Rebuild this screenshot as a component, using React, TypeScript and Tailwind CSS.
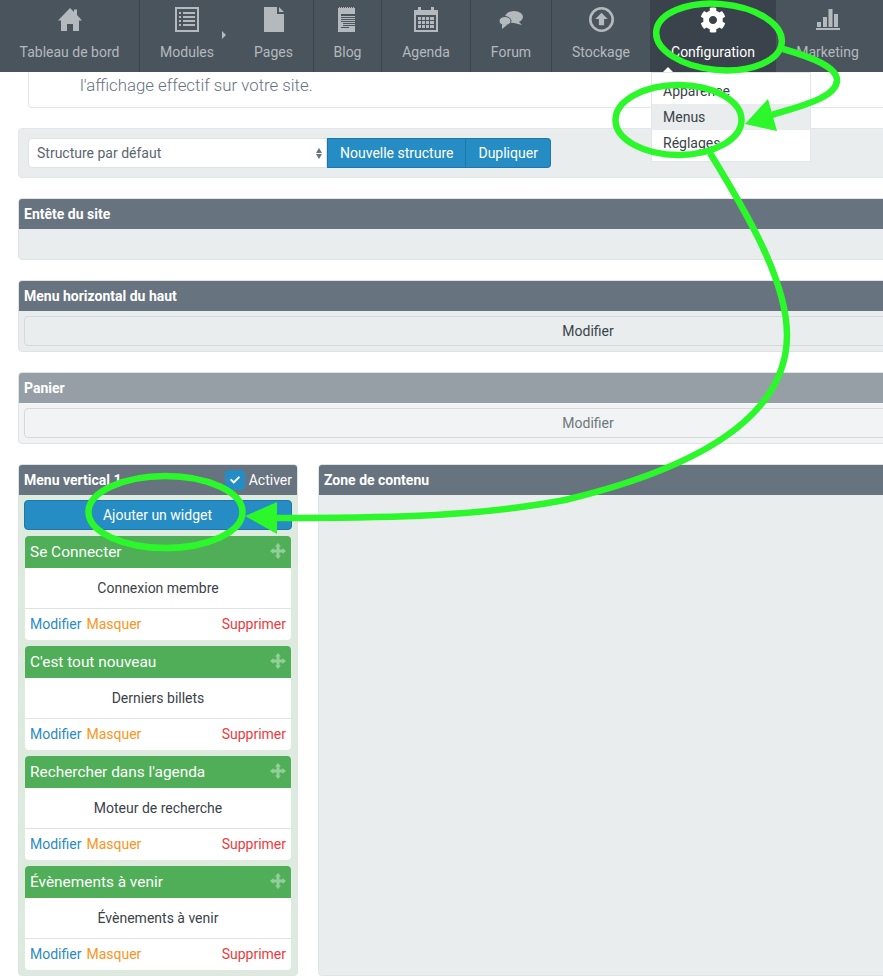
import { FaCog, FaCheck } from "react-icons/fa";

const roboto = { fontFamily: "Roboto, sans-serif" };

function HomeIcon() {
  return (
    <svg width="24" height="23" viewBox="0 0 24 23" fill="#b4b9bd">
      <path d="M12 0l4 4V1.500h3V7l5 5.500h-3V23h-6v-7H9v7H3V12.500H0z" />
    </svg>
  );
}

function ListIcon() {
  return (
    <svg width="24" height="25" viewBox="0 0 24 25" fill="#b4b9bd">
      <path fillRule="evenodd" d="M0 0h24v25H0zM2 2v21h20V2z" />
      <path d="M4 5h2v2H4zM8 5h12v2H8zM4 9h2v2H4zM8 9h12v2H8zM4 13h2v2H4zM8 13h12v2H8zM4 17h2v2H4zM8 17h12v2H8z" />
    </svg>
  );
}

function PageIcon() {
  return (
    <svg width="20" height="25" viewBox="0 0 20 25" fill="#b4b9bd">
      <path d="M0 0h13v7h7v18H0zM15 0l5 5h-5z" />
    </svg>
  );
}

function BlogIcon() {
  return (
    <svg width="20" height="25" viewBox="0 0 20 25" fill="#b4b9bd">
      <path fillRule="evenodd" d="M0 1h1v-1h1v1h1v-1h1v1h1v-1h1v1h1v-1h1v1h1v-1h1v1h1v-1h1v1h1v-1h1v1h1v-1h1v1h1v24H0zM3 7v2h14V7zM3 10v1h14v-1zM3 12v1h14v-1zM3 14v1h14v-1zM5 16v1h12v-1zM5 18v1h12v-1zM3 20v1h8v-1z" />
    </svg>
  );
}

function CalendarIcon() {
  return (
    <svg width="24" height="25" viewBox="0 0 24 25" fill="#b4b9bd">
      <path fillRule="evenodd" d="M0 3h4V0h3v3h10V0h3v3h4v22H0zM2 8v15h20V8z" />
      <path d="M4 10h3v3H4zM8 10h3v3H8zM12 10h3v3h-3zM16 10h4v3h-4zM4 14h3v3H4zM8 14h3v3H8zM12 14h3v3h-3zM16 14h4v3h-4zM4 18h3v3H4zM8 18h3v3H8zM12 18h3v3h-3zM16 18h4v3h-4z" />
    </svg>
  );
}

function ForumIcon() {
  return (
    <svg width="24" height="18" viewBox="0 0 24 18" fill="#b4b9bd">
      <ellipse cx="15" cy="6" rx="9" ry="6" />
      <path d="M19 10l4 4-8-2z" />
      <ellipse cx="6" cy="10" rx="6" ry="4.500" stroke="#4a545d" strokeWidth="1" />
      <path d="M3 13l0 5 5-4z" />
    </svg>
  );
}

function UploadIcon() {
  return (
    <svg width="25" height="25" viewBox="0 0 24 24" fill="#b4b9bd">
      <path fillRule="evenodd" d="M12 0a12 12 0 1 0 0 24a12 12 0 0 0 0-24zM12 2.500a9.500 9.500 0 1 1 0 19a9.500 9.500 0 0 1 0-19z" />
      <path d="M12 5.500l6 6h-3.500v6h-5v-6H6z" />
    </svg>
  );
}

function ChartIcon() {
  return (
    <svg width="24" height="21" viewBox="0 0 24 21" fill="#b4b9bd">
      <path d="M0 19h24v2H0zM1 13h4v5H1zM7 8h4v10H7zM12.500 0h4v18h-4zM18 5h4v13h-4z" />
    </svg>
  );
}

function MoveIcon() {
  return (
    <svg className="mb-[2px]" width="16" height="16" viewBox="0 0 16 16" fill="#93cf98">
      <path d="M8 0l3 3.500H9.500v3h3V5L16 8l-3.500 3V9.500h-3v3H11L8 16l-3-3.500h1.500v-3h-3V11L0 8l3.500-3v1.500h3v-3H5z" />
    </svg>
  );
}

const navGroups = [
  { w: "w-[140px]", items: [{ label: "Tableau de bord", w: "w-[139px]", icon: <HomeIcon /> }] },
  {
    w: "w-[174px]",
    items: [
      { label: "Modules", w: "w-[94px]", icon: <ListIcon /> },
      { label: "Pages", w: "w-[79px]", icon: <PageIcon /> },
    ],
  },
  { w: "w-[68px]", items: [{ label: "Blog", w: "w-[67px]", icon: <BlogIcon /> }] },
  { w: "w-[89px]", items: [{ label: "Agenda", w: "w-[88px]", icon: <CalendarIcon /> }] },
  { w: "w-[81px]", items: [{ label: "Forum", w: "w-[80px]", icon: <ForumIcon /> }] },
  { w: "w-[98px]", items: [{ label: "Stockage", w: "w-[98px]", icon: <UploadIcon /> }] },
];

function NavItem({ label, icon, w }: { label: string; icon: React.ReactNode; w: string }) {
  return (
    <div className={`flex shrink-0 flex-col items-center ${w}`}>
      <div className="flex h-[36px] items-center justify-center pt-[3px]">{icon}</div>
      <div className="mt-[7px] text-sm leading-[18px] text-[#b4b9bd]">{label}</div>
    </div>
  );
}

function Nav() {
  return (
    <div className="flex h-[72px] w-[883px] bg-[#4a545d]">
      {navGroups.map((g, i) => (
        <div
          key={i}
          className={`relative flex shrink-0 ${i < 5 ? "border-r border-[#3b444c]" : ""} ${g.w}`}
        >
          {g.items.map((it) => (
            <NavItem key={it.label} label={it.label} icon={it.icon} w={it.w} />
          ))}
          {g.items.length > 1 && (
            <div className="absolute left-[82px] top-[31px] h-0 w-0 border-y-[4px] border-l-[4px] border-y-transparent border-l-[#b4b9bd]" />
          )}
        </div>
      ))}
      <div className="relative flex w-[126px] shrink-0 flex-col items-center bg-[#3a424b]">
        <div className="flex h-[36px] items-center justify-center pt-[3px]">
          <FaCog size={26} color="#ffffff" />
        </div>
        <div className="mt-[7px] text-sm leading-[18px] text-white">Configuration</div>
        <div className="absolute bottom-0 left-[13px] h-0 w-0 border-x-[5px] border-b-[5px] border-x-transparent border-b-white" />
      </div>
      <NavItem label="Marketing" icon={<ChartIcon />} w="w-[103px]" />
    </div>
  );
}

function Panel({ title, muted, children }: { title: string; muted?: boolean; children?: React.ReactNode }) {
  return (
    <div className={`overflow-hidden rounded border border-[#dfe3e5] ${muted ? "bg-[#f1f3f4]" : "bg-[#e9edee]"}`}>
      <div className={`h-[30px] px-[5px] text-sm font-bold leading-[30px] text-white ${muted ? "bg-[#979fa6]" : "bg-[#67737f]"}`}>
        {title}
      </div>
      {children}
    </div>
  );
}

function ModifyBar({ muted }: { muted?: boolean }) {
  return (
    <div className="p-[5px]">
      <div className={`h-[30px] rounded border border-[#d5d9db] text-center text-sm leading-[28px] ${muted ? "text-[#6f767d]" : "text-[#3b4249]"}`}>
        Modifier
      </div>
    </div>
  );
}

function Widget({ title, body }: { title: string; body: string }) {
  return (
    <div className="h-[104px] overflow-hidden rounded bg-white">
      <div className="flex h-[32px] items-center justify-between bg-[#4fae57] pl-[5px] pr-[5px] text-[15.4px] text-white">
        <span className="pt-[1px]">{title}</span>
        <MoveIcon />
      </div>
      <div className="h-[41px] border-b border-[#dfe3e5] pt-[10px] text-center text-sm leading-[20px] text-[#3b4249]">
        {body}
      </div>
      <div className="flex justify-between px-[5px] pt-[5px] text-sm leading-[20px]">
        <div className="flex gap-[5px]">
          <span className="text-[#2a8bc4]">Modifier</span>
          <span className="text-[#fb9420]">Masquer</span>
        </div>
        <span className="text-[#ee3a3a]">Supprimer</span>
      </div>
    </div>
  );
}

const widgets = [
  { title: "Se Connecter", body: "Connexion membre" },
  { title: "C'est tout nouveau", body: "Derniers billets" },
  { title: "Rechercher dans l'agenda", body: "Moteur de recherche" },
  { title: "Évènements à venir", body: "Évènements à venir" },
];

function Annotations() {
  return (
    <svg className="pointer-events-none absolute left-0 top-0" width="883" height="980" viewBox="0 0 883 980" fill="none" stroke="#2bf72b" strokeWidth="6.5">
      <ellipse cx="719" cy="37" rx="63" ry="33" transform="rotate(5 719 37)" />
      <ellipse cx="678.500" cy="120" rx="63" ry="35" />
      <ellipse cx="165.500" cy="512" rx="77" ry="36" />
      <path d="M783 49C815 58 837 68 837 80C837 98 800 106 768 116" />
      <path d="M710 153C745 210 787 280 787 335C787 420 690 470 565 500C470 518 370 518 270 518" />
      <polygon points="745,124 768,99 777,131" fill="#2bf72b" stroke="none" />
      <polygon points="245,516 277,502 277,534" fill="#2bf72b" stroke="none" />
    </svg>
  );
}

export default function App() {
  return (
    <div className="relative h-[980px] w-[883px] overflow-hidden bg-white" style={roboto}>
      <Nav />
      <div className="w-[1158px] pl-[18px]">
        <div className="ml-[10px] h-[36px] rounded-b border border-t-0 border-[#e3e6e8] pl-[51px] pt-[3px] text-[16.8px] font-light leading-[20px] text-[#66737f]">
          l'affichage effectif sur votre site.
        </div>
        <div className="mt-[20px] flex h-[50px] items-center rounded border border-[#e3e6e8] bg-[#e9edee] pl-[9px]">
          <div className="flex h-[30px] w-[299px] items-center justify-between rounded-l border border-[#dfe3e5] bg-white pl-[8px] pr-[4px] text-sm text-[#5b6670]">
            <span>Structure par défaut</span>
            <span className="flex flex-col gap-[1px]">
              <span className="h-0 w-0 border-x-[3px] border-b-[5px] border-x-transparent border-b-[#69747e]" />
              <span className="h-0 w-0 border-x-[3px] border-t-[5px] border-x-transparent border-t-[#69747e]" />
            </span>
          </div>
          <div className="flex h-[30px] items-center border border-[#1f76a8] bg-[#268cc4] px-[12px] text-sm text-white">Nouvelle structure</div>
          <div className="flex h-[30px] items-center rounded-r border border-l-0 border-[#1f76a8] bg-[#268cc4] px-[12px] text-sm text-white">Dupliquer</div>
        </div>
        <div className="mt-[20px] flex flex-col gap-[20px]">
          <Panel title="Entête du site">
            <div className="h-[30px]" />
          </Panel>
          <Panel title="Menu horizontal du haut">
            <ModifyBar />
          </Panel>
          <Panel title="Panier" muted>
            <ModifyBar muted />
          </Panel>
        </div>
        <div className="mt-[20px] flex h-[512px] gap-[20px]">
          <div className="w-[280px] shrink-0 overflow-hidden rounded border border-[#dfe3e5] bg-[#dcebdd]">
            <div className="flex h-[30px] items-center justify-between bg-[#67737f] px-[5px] text-sm text-white">
              <span className="font-bold">Menu vertical 1</span>
              <span className="flex items-center gap-[4px]">
                <span className="flex h-[20px] w-[20px] items-center justify-center rounded bg-[#268cc4]">
                  <FaCheck size={10} color="#ffffff" />
                </span>
                Activer
              </span>
            </div>
            <div className="px-[5px] pt-[5px]">
              <div className="h-[30px] rounded border border-[#1f76a8] bg-[#268cc4] pr-[1px] text-center text-sm leading-[28px] text-white">
                Ajouter un widget
              </div>
              <div className="mt-[6px] flex flex-col gap-[6px] pl-[1px] pr-[1px]">
                {widgets.map((w) => (
                  <Widget key={w.title} title={w.title} body={w.body} />
                ))}
              </div>
            </div>
          </div>
          <div className="flex-1 overflow-hidden rounded border border-[#dfe3e5] bg-[#e9edee]">
            <div className="h-[30px] bg-[#67737f] px-[5px] text-sm font-bold leading-[30px] text-white">Zone de contenu</div>
          </div>
        </div>
      </div>
      <div className="absolute left-[651px] top-[72px] w-[160px] border border-[#e3e6e8] bg-white py-[5px] text-sm leading-[26px] text-[#3b4249]">
        <div className="pl-[11px]">Apparence</div>
        <div className="bg-[#e9edee] pl-[11px]">Menus</div>
        <div className="pl-[11px]">Réglages</div>
      </div>
      <Annotations />
    </div>
  );
}
